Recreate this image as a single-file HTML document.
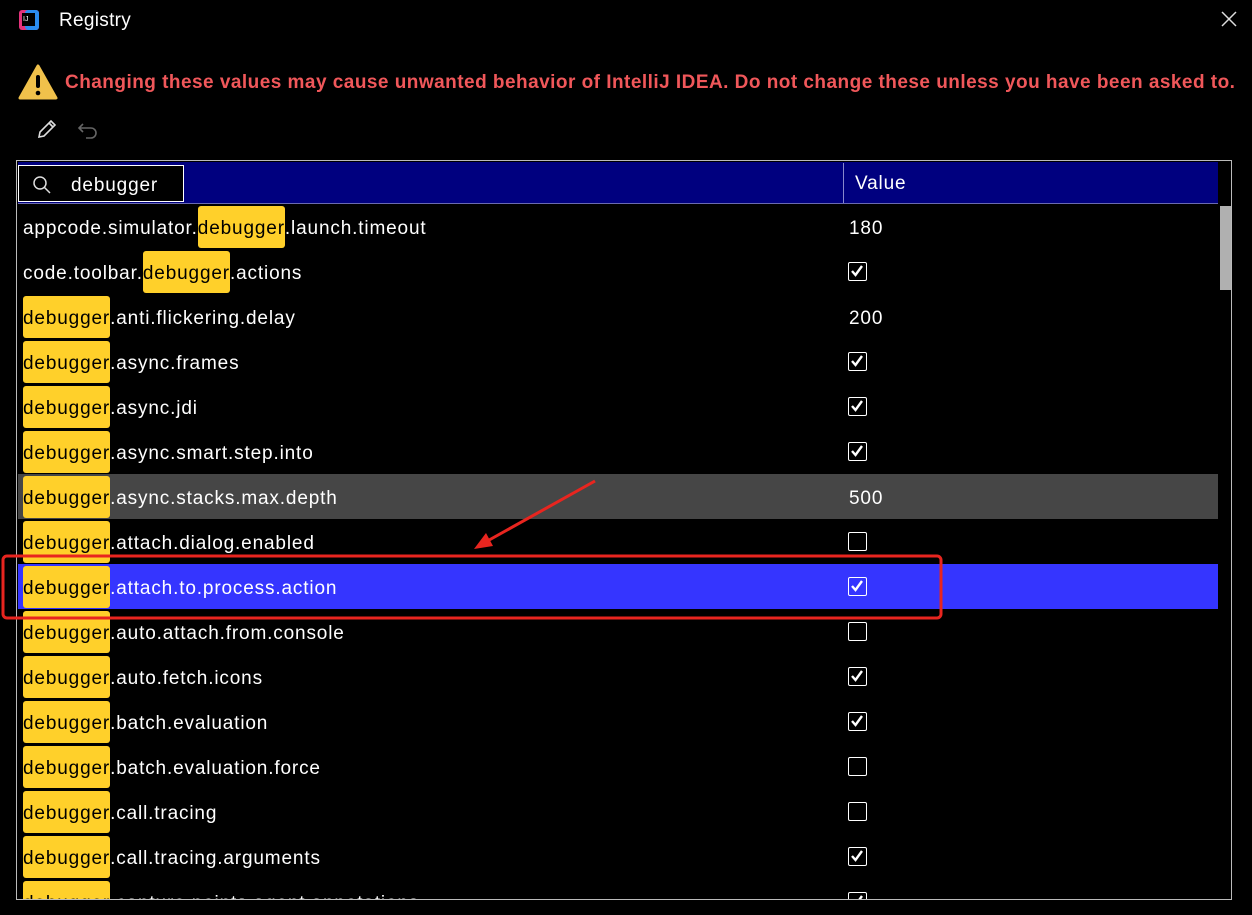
<!DOCTYPE html><html><head><style>
body{margin:0;width:1252px;height:915px;background:#000;overflow:hidden;font-family:"Liberation Sans",sans-serif;color:#fff;position:relative}
.a{position:absolute}
.row{position:absolute;left:18px;width:1200px;height:45px;font-size:19px;line-height:45px;letter-spacing:0.85px}
.row .k{position:absolute;left:5px;top:2px;white-space:nowrap}
.row .v{position:absolute;left:831px;top:2px}
.h{background:#ffd02a;color:#000;border-radius:3px;display:inline-block;line-height:45px;height:42px;vertical-align:top;overflow:visible}
.cb{position:absolute;left:830px;top:13px;width:19px;height:19px;border:1.5px solid #fff;border-radius:2px;box-sizing:border-box}
</style></head><body>
<svg class="a" style="left:17px;top:8px" width="24" height="24"><rect x="2" y="2" width="20" height="20" fill="#e5337c" rx="3"/><rect x="8" y="2" width="14" height="20" fill="#2a8cf0" rx="3"/><rect x="5" y="5" width="13" height="13" fill="#000"/><text x="6" y="13" font-size="7" fill="#fff" font-family="Liberation Sans">IJ</text></svg>
<div class="a" style="left:59px;top:10px;font-size:19px;letter-spacing:0.3px">Registry</div>
<svg class="a" style="left:1220px;top:10px" width="18" height="18"><path d="M2 2 L16 16 M16 2 L2 16" stroke="#ddd" stroke-width="1.5"/></svg>
<svg class="a" style="left:18px;top:64px" width="40" height="36"><path d="M20 2 L38 34 L2 34 Z" fill="#f0c14b" stroke="#f0c14b" stroke-linejoin="round" stroke-width="3"/><rect x="18" y="11" width="4" height="13" fill="#000" rx="2"/><circle cx="20" cy="29" r="2.3" fill="#000"/></svg>
<div class="a" style="left:65px;top:72px;font-size:19px;font-weight:bold;color:#f0575a;white-space:nowrap;letter-spacing:0.47px">Changing these values may cause unwanted behavior of IntelliJ IDEA. Do not change these unless you have been asked to.</div>
<svg class="a" style="left:36px;top:118px" width="64" height="22"><path d="M3 19 L4 14 L15 3 L19 7 L8 18 Z M13 5 L17 9" fill="none" stroke="#ddd" stroke-width="1.6"/><path d="M47 6 L43 10 L47 14 M43 10 H55 a5 5 0 0 1 0 10 H50" fill="none" stroke="#666" stroke-width="1.6"/></svg>
<div class="a" style="left:16px;top:160px;width:1216px;height:740px;border:1.5px solid #bbb;box-sizing:border-box"></div>
<div class="a" style="left:18px;top:162px;width:1200px;height:41px;background:#00007f;border-bottom:1px solid #6a6ab0"></div>
<div class="a" style="left:18px;top:165px;width:166px;height:37px;background:#000;border:1.5px solid #fff;box-sizing:border-box"></div>
<svg class="a" style="left:32px;top:175px" width="20" height="20"><circle cx="8" cy="8" r="6" fill="none" stroke="#ddd" stroke-width="1.5"/><path d="M12.5 12.5 L18 18" stroke="#ddd" stroke-width="1.5"/></svg>
<div class="a" style="left:71px;top:175px;font-size:19px;letter-spacing:0.85px">debugger</div>
<div class="a" style="left:843px;top:163px;width:1px;height:40px;background:#8888cc"></div>
<div class="a" style="left:855px;top:173px;font-size:19px;letter-spacing:0.85px">Value</div>
<div class="a" style="left:1220px;top:206px;width:11px;height:84px;background:#b0b0b0"></div>
<div class="row" style="top:204px"><span class="k">appcode.simulator.<span class="h">debugger</span>.launch.timeout</span><span class="v">180</span></div>
<div class="row" style="top:249px"><span class="k">code.toolbar.<span class="h">debugger</span>.actions</span><span class="cb">✓</span></div>
<div class="row" style="top:294px"><span class="k"><span class="h">debugger</span>.anti.flickering.delay</span><span class="v">200</span></div>
<div class="row" style="top:339px"><span class="k"><span class="h">debugger</span>.async.frames</span><span class="cb"></span></div>
<div class="row" style="top:384px"><span class="k"><span class="h">debugger</span>.async.jdi</span><span class="cb"></span></div>
<div class="row" style="top:429px"><span class="k"><span class="h">debugger</span>.async.smart.step.into</span><span class="cb"></span></div>
<div class="row" style="top:474px;background:#464646"><span class="k"><span class="h">debugger</span>.async.stacks.max.depth</span><span class="v">500</span></div>
<div class="row" style="top:519px"><span class="k"><span class="h">debugger</span>.attach.dialog.enabled</span><span class="cb" data-e></span></div>
<div class="row" style="top:564px;background:#3535ff"><span class="k"><span class="h">debugger</span>.attach.to.process.action</span><span class="cb"></span></div>
<div class="row" style="top:609px"><span class="k"><span class="h">debugger</span>.auto.attach.from.console</span><span class="cb" data-e></span></div>
<div class="row" style="top:654px"><span class="k"><span class="h">debugger</span>.auto.fetch.icons</span><span class="cb"></span></div>
<div class="row" style="top:699px"><span class="k"><span class="h">debugger</span>.batch.evaluation</span><span class="cb"></span></div>
<div class="row" style="top:744px"><span class="k"><span class="h">debugger</span>.batch.evaluation.force</span><span class="cb" data-e></span></div>
<div class="row" style="top:789px"><span class="k"><span class="h">debugger</span>.call.tracing</span><span class="cb" data-e></span></div>
<div class="row" style="top:834px"><span class="k"><span class="h">debugger</span>.call.tracing.arguments</span><span class="cb"></span></div>
<div class="row" style="top:879px;height:20px;overflow:hidden"><span class="k"><span class="h">debugger</span>.capture.points.agent.annotations</span><span class="cb"></span></div>
<svg class="a" style="left:0;top:0" width="1252" height="915">
<rect x="3" y="556" width="938" height="62" rx="4" fill="none" stroke="#e8251f" stroke-width="3"/>
<path d="M595 481 L482 544" stroke="#e8251f" stroke-width="3"/><path d="M474 549 L486 533 L493 546 Z" fill="#e8251f"/>
</svg>
<script>
document.querySelectorAll('.cb').forEach(function(e){if(!e.hasAttribute('data-e'))e.innerHTML='<svg width="16" height="16" style="position:absolute;left:0;top:0"><path d="M3 8 L6.5 12 L13 3" fill="none" stroke="#fff" stroke-width="2.4"/></svg>';else e.innerHTML='';});
</script>
</body></html>
